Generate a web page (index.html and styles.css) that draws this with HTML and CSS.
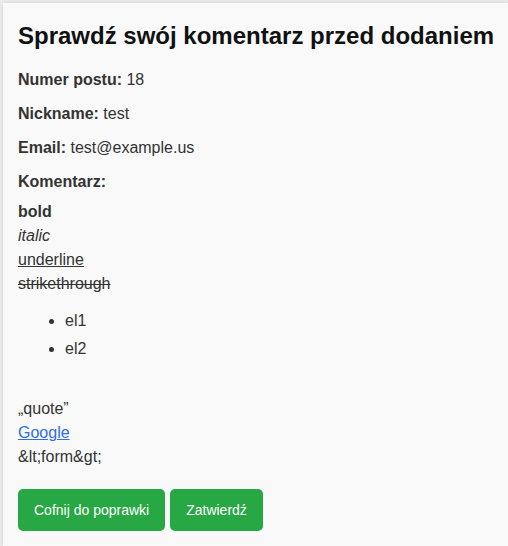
FILE: index.html
```html
<!DOCTYPE html>
<html lang="pl">
<head>
<meta charset="utf-8">
<title>Sprawdź swój komentarz</title>
<link rel="stylesheet" href="styles.css">
</head>
<body>
<div class="card">
  <h1 class="title">Sprawdź swój komentarz przed dodaniem</h1>
  <p class="field"><strong>Numer postu:</strong> 18</p>
  <p class="field"><strong>Nickname:</strong> test</p>
  <p class="field"><strong>Email:</strong> test@example.us</p>
  <p class="field field-last"><strong>Komentarz:</strong></p>
  <div class="comment">
    <b>bold</b><br>
    <i>italic</i><br>
    <u>underline</u><br>
    <s>strikethrough</s>
    <ul class="list">
      <li>el1</li>
      <li>el2</li>
    </ul>
    <div class="after-list">„quote”<br>
    <a href="#" class="link">Google</a><br>
    &amp;lt;form&amp;gt;</div>
  </div>
  <div class="actions">
    <button class="btn" type="button">Cofnij do poprawki</button>
    <button class="btn" type="button">Zatwierdź</button>
  </div>
</div>
</body>
</html>
```
FILE: styles.css
```css
html, body {
  overflow: hidden;
}
body {
  margin: 0;
  padding: 3px 0 0 3px;
  background: #ececec;
  font-family: "Liberation Sans", Arial, sans-serif;
  font-size: 16px;
  line-height: 1.5;
  color: #333;
}
.card {
  box-sizing: border-box;
  width: 505px;
  min-height: calc(100vh - 3px);
  background: #f9f9f9;
  padding: 15px 0 10px 15px;
  box-shadow: 0 0 4px rgba(0, 0, 0, 0.12);
}
.title {
  margin: 0 0 14px;
  font-size: 24px;
  line-height: 36px;
  color: #111;
  white-space: nowrap;
}
.field {
  margin: 10px 0;
}
.field-last {
  margin-bottom: 6px;
}
.list {
  margin: 13px 0 0;
  padding-left: 47px;
}
.list li {
  margin-bottom: 4px;
}
.after-list {
  margin-top: 36px;
}
.link {
  color: #2f6fe0;
}
.actions {
  display: flex;
  gap: 5px;
  margin-top: 20px;
}
.btn {
  font-family: "Liberation Sans", Arial, sans-serif;
  font-size: 14px;
  line-height: 22px;
  padding: 10px 16px;
  border: 0;
  border-radius: 5px;
  background: #28a745;
  color: #fff;
}
```
